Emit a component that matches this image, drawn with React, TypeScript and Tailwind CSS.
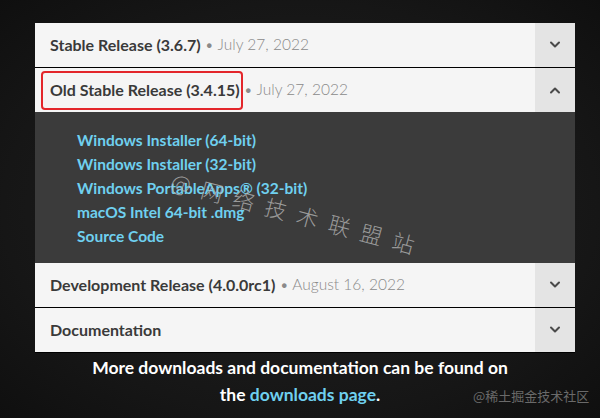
import React from "react";

const Chevron = ({ up }: { up?: boolean }) => (
  <svg width="12" height="8" viewBox="0 0 12 8" fill="none">
    <path
      d={up ? "M2 6.5 L6 2.5 L10 6.5" : "M2 1.5 L6 5.5 L10 1.5"}
      stroke="#4a4a4a"
      strokeWidth="2"
      strokeLinecap="round"
      strokeLinejoin="round"
    />
  </svg>
);

const Row = ({
  title,
  date,
  up,
  boxed,
  border,
}: {
  title: string;
  date?: string;
  up?: boolean;
  boxed?: boolean;
  border?: boolean;
}) => (
  <div className={`flex bg-[#f5f5f5] ${border ? "h-[45px] border-b border-black" : "h-[44px]"}`}>
    <div className="relative flex flex-1 items-center pl-[15px] text-[16px]">
      <span className="font-bold text-[#3a3a3a]">{title}</span>
      {date && (
        <span className="text-[15.5px] font-light text-[#8a8a8a]">&nbsp;•&nbsp;{date}</span>
      )}
      {boxed && (
        <div className="absolute left-[6px] top-[3px] h-[39px] w-[202px] rounded-[4px] border-2 border-[#e3262b]" />
      )}
    </div>
    <div className="flex w-[40px] items-center justify-center bg-[#e4e4e4]">
      <Chevron up={up} />
    </div>
  </div>
);

export default function App() {
  const links = [
    "Windows Installer (64-bit)",
    "Windows Installer (32-bit)",
    "Windows PortableApps® (32-bit)",
    "macOS Intel 64-bit .dmg",
    "Source Code",
  ];
  return (
    <div
      className="relative h-[418px] w-[600px] overflow-hidden bg-[radial-gradient(ellipse_at_center,#222222_0%,#161616_70%,#0f0f0f_100%)] pt-[23px]"
      style={{ fontFamily: "Lato, 'Noto Sans', sans-serif" }}
    >
      <div className="mx-[35px] w-[540px]">
        <Row title="Stable Release (3.6.7)" date="July 27, 2022" border />
        <Row title="Old Stable Release (3.4.15)" date="July 27, 2022" up boxed />
        <div className="flex h-[151px] flex-col bg-[#3b3b3b] pl-[42px] pt-[16px]">
          {links.map((l) => (
            <a
              key={l}
              className="h-[24px] text-[15.5px] font-bold leading-[24px] text-[#6fd0ef]"
            >
              {l}
            </a>
          ))}
        </div>
        <Row title="Development Release (4.0.0rc1)" date="August 16, 2022" border />
        <Row title="Documentation" border />
      </div>
      <div className="mt-[1px] text-center text-[17.5px] font-bold leading-[27px] text-white">
        <div>More downloads and documentation can be found on</div>
        <div>
          the <span className="text-[#6fd0ef]">downloads page</span>.
        </div>
      </div>
      <div
        className="pointer-events-none absolute left-[176px] top-[164px] origin-top-left rotate-[15deg] text-[22px] font-light tracking-[11px] text-[#b4b4b4]/80"
        style={{ fontFamily: "'Noto Sans CJK SC', sans-serif" }}
      >
        @网络技术联盟站
      </div>
      <div
        className="absolute left-[473px] top-[386px] text-[13px] text-[#6a6a6a]"
        style={{ fontFamily: "'Noto Sans CJK SC', sans-serif" }}
      >
        @稀土掘金技术社区
      </div>
    </div>
  );
}
